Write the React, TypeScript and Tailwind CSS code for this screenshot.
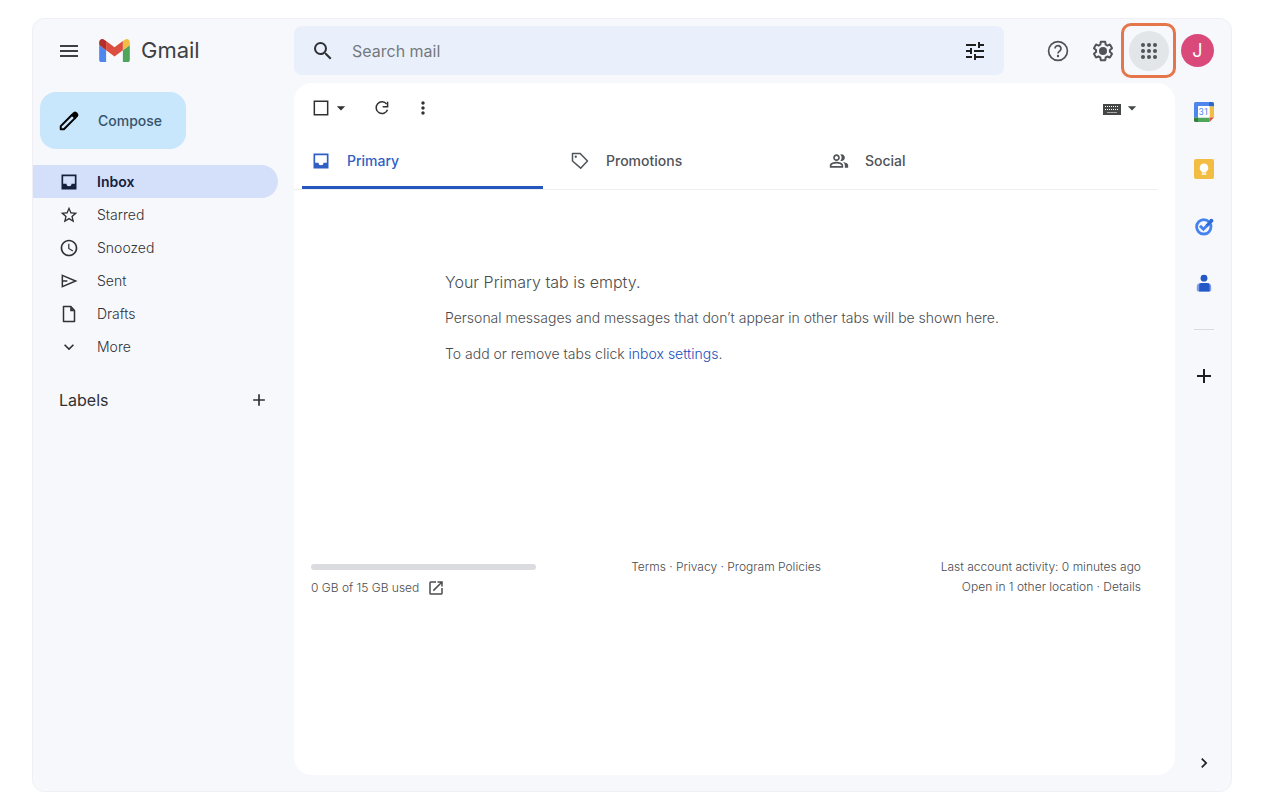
import React from 'react';
import {
  MdAccessTime,
  MdAdd,
  MdArrowDropDown,
  MdChevronRight,
  MdExpandMore,
  MdMenu,
  MdMoreVert,
  MdOpenInNew,
  MdOutlinePeopleAlt,
  MdSearch,
  MdStarBorder,
  MdTune,
} from 'react-icons/md';

const GmailLogo = () => (
  <svg width="31" height="23" viewBox="52 42 88 66" aria-hidden="true">
    <path fill="#4f86ee" d="M58 108h14V74L52 59v43c0 3.32 2.69 6 6 6" />
    <path fill="#4fa65a" d="M120 108h14c3.32 0 6-2.69 6-6V59l-20 15" />
    <path fill="#f2bd42" d="M120 48v26l20-15v-8c0-7.42-8.47-11.65-14.4-7.2" />
    <path fill="#dc4e3f" d="M72 74V48l24 18 24-18v26L96 92" />
    <path fill="#b3302a" d="M52 51v8l20 15V48l-5.6-4.2c-5.94-4.45-14.4-.22-14.4 7.2" />
  </svg>
);

const PencilIcon = () => (
  <svg width="22" height="22" viewBox="0 0 24 24" aria-hidden="true">
    <path
      d="M3 21v-3.4L15.4 5.2l3.4 3.4L6.4 21z"
      fill="none"
      stroke="#000"
      strokeWidth="2.2"
      strokeLinejoin="round"
    />
    <path d="M14 5.2 16.9 2.4a2.6 2.6 0 0 1 3.4 0l1.3 1.3a2.6 2.6 0 0 1 0 3.4L18.8 10z" fill="#000" />
  </svg>
);

const InboxIcon = () => (
  <svg width="20" height="20" viewBox="0 0 24 24" fill="currentColor" aria-hidden="true">
    <path d="M3 3h18v18H3zm2 2v9h4a3 3 0 0 0 6 0h4V5z" fillRule="evenodd" />
  </svg>
);

const SquareIcon = () => (
  <svg width="20" height="20" viewBox="0 0 24 24" aria-hidden="true">
    <path d="M4 4h16v16H4z" fill="none" stroke="currentColor" strokeWidth="1.8" />
  </svg>
);

const RefreshIcon = () => (
  <svg width="20" height="20" viewBox="0 0 24 24" aria-hidden="true">
    <path d="M17.6 7.4A7 7 0 1 0 18.6 14" fill="none" stroke="currentColor" strokeWidth="1.8" />
    <path d="M19.6 4.5v6.8h-6.8v-1.8h5V4.5z" fill="currentColor" />
  </svg>
);

const KeyboardIcon = () => (
  <svg width="20" height="20" viewBox="0 0 20 20" aria-hidden="true">
    <path d="M1 6h18v11H1z" fill="currentColor" />
    {[3, 5, 7, 9, 11, 13, 15].map((x) => (
      <path key={x} d={`M${x} 8h1v1h-1zM${x} 11h1v1h-1z`} fill="#fff" />
    ))}
    <path d="M5 14h10v1H5z" fill="#aaa" />
  </svg>
);

const FileIcon = () => (
  <svg width="20" height="20" viewBox="0 0 24 24" aria-hidden="true">
    <path d="M5.4 3h8.8l4.4 4.8V21H5.4z" fill="none" stroke="currentColor" strokeWidth="1.8" strokeLinejoin="round" />
    <path d="M13.4 3v5.8h5.2z" fill="currentColor" />
  </svg>
);

const SendIcon = () => (
  <svg width="20" height="20" viewBox="0 0 24 24" aria-hidden="true">
    <path
      d="M4 5.2 20 12 4 18.8zM4 12h6"
      fill="none"
      stroke="currentColor"
      strokeWidth="1.8"
      strokeLinejoin="miter"
    />
  </svg>
);

const TagIcon = () => (
  <svg width="20" height="20" viewBox="0 0 24 24" aria-hidden="true">
    <path
      d="M3 3h9.2l8.8 9-8.2 8.6L3 12z"
      fill="none"
      stroke="currentColor"
      strokeWidth="1.8"
      strokeLinejoin="round"
    />
    <circle cx="6.9" cy="6.9" r="1.4" fill="currentColor" />
  </svg>
);

const HelpIcon = () => (
  <svg width="24" height="24" viewBox="0 0 24 24" aria-hidden="true">
    <circle cx="12" cy="12" r="9.4" fill="none" stroke="currentColor" strokeWidth="1.7" />
    <path
      d="M9 9.6a3 3 0 1 1 4.9 2.3c-1 .8-1.9 1.3-1.9 2.6"
      fill="none"
      stroke="currentColor"
      strokeWidth="1.7"
    />
    <circle cx="12" cy="17" r="1.2" fill="currentColor" />
  </svg>
);

const GearIcon = () => (
  <svg width="24" height="24" viewBox="0 0 24 24" aria-hidden="true">
    <path
      d="M13.85 22.25h-3.7c-.74 0-1.36-.54-1.45-1.27l-.27-1.89c-.27-.14-.53-.29-.79-.46l-1.8.72c-.7.26-1.47-.03-1.81-.65L2.2 15.53c-.35-.66-.2-1.44.36-1.88l1.53-1.19c-.01-.15-.02-.3-.02-.46 0-.15.01-.31.02-.46l-1.52-1.19c-.59-.45-.74-1.26-.37-1.88l1.85-3.19c.34-.62 1.11-.9 1.79-.63l1.81.73c.26-.17.52-.32.78-.46l.27-1.91c.09-.7.71-1.25 1.44-1.25h3.7c.74 0 1.36.54 1.45 1.27l.27 1.89c.27.14.53.29.79.46l1.8-.72c.71-.26 1.48.03 1.82.65l1.84 3.18c.36.66.2 1.44-.36 1.88l-1.52 1.19c.01.15.02.3.02.46s-.01.31-.02.46l1.52 1.19c.56.45.72 1.23.37 1.86l-1.86 3.22c-.34.62-1.11.9-1.8.63l-1.8-.72c-.26.17-.52.32-.78.46l-.27 1.91c-.1.68-.72 1.22-1.46 1.22zm-3.23-2h2.76l.37-2.55.53-.22c.44-.18.88-.44 1.34-.78l.45-.34 2.38.96 1.38-2.4-2.03-1.58.07-.56c.03-.26.06-.51.06-.78s-.03-.53-.06-.78l-.07-.56 2.03-1.58-1.39-2.4-2.39.96-.45-.35c-.42-.32-.87-.58-1.33-.77l-.52-.22-.37-2.55h-2.76l-.37 2.55-.53.21c-.44.19-.88.44-1.34.79l-.45.33-2.38-.95-1.39 2.39 2.03 1.58-.07.56a7 7 0 0 0-.06.79c0 .26.02.53.06.78l.07.56-2.03 1.58 1.38 2.4 2.39-.96.45.35c.43.33.86.58 1.33.77l.53.22z"
      fill="currentColor"
    />
    <circle cx="12" cy="12" r="4" fill="currentColor" />
  </svg>
);

const AppsIcon = () => (
  <svg width="24" height="24" viewBox="0 0 24 24" fill="currentColor" aria-hidden="true">
    {[6, 12, 18].map((y) => [6, 12, 18].map((x) => <circle key={`${x}-${y}`} cx={x} cy={y} r="2" />))}
  </svg>
);

const CalendarIcon = () => (
  <svg width="20" height="20" viewBox="0 0 20 20" aria-hidden="true">
    <path d="M1.5 0H15v4.5H4.5V15.5H0v-14A1.5 1.5 0 0 1 1.5 0" fill="#4f86ee" />
    <path d="M15 0h3.5A1.5 1.5 0 0 1 20 1.5v3h-5z" fill="#2f66c9" />
    <path d="M15.5 4.5H20v11h-4.5z" fill="#f2bd42" />
    <path d="M4 15.5h11.5V20H4z" fill="#4fa65a" />
    <path d="M0 15.5h4V20H1.5A1.5 1.5 0 0 1 0 18.5z" fill="#357f3f" />
    <path d="M15.5 15.5H20L15.5 20z" fill="#dc4e3f" />
    <path d="M4 4h11.5v11.5H4z" fill="#fff" />
    <text x="9.8" y="13.2" fontSize="9" textAnchor="middle" fill="#4f86ee" fontFamily="Roboto, sans-serif">
      31
    </text>
  </svg>
);

const KeepIcon = () => (
  <svg width="20" height="20" viewBox="0 0 20 20" aria-hidden="true">
    <rect width="20" height="20" rx="2" fill="#f2bd42" />
    <path d="M10 4.6a4.3 4.3 0 0 0-2.3 7.9v1h4.6v-1A4.3 4.3 0 0 0 10 4.6M7.7 14.2h4.6v1.5H7.7z" fill="#fff" />
  </svg>
);

const TasksIcon = () => (
  <svg width="20" height="20" viewBox="0 0 20 20" aria-hidden="true">
    <circle cx="9.8" cy="10.8" r="7.2" fill="none" stroke="#4483ee" strokeWidth="2.8" />
    <path d="m6 9.8 3.4 3.4 4.2-4.2" fill="none" stroke="#4483ee" strokeWidth="3" />
    <path d="m12.8 9.8 4.4-4.8" stroke="#2f6ad6" strokeWidth="3" />
    <circle cx="17.4" cy="4.8" r="2" fill="#2f6ad6" />
  </svg>
);

const ContactsIcon = () => (
  <svg width="20" height="20" viewBox="0 0 20 20" aria-hidden="true">
    <circle cx="10" cy="5.2" r="3.4" fill="#2458c6" />
    <path d="M6.8 10h6.4a4 4 0 0 1 4 4v3a1.4 1.4 0 0 1-1.4 1.4H4.2A1.4 1.4 0 0 1 2.8 17v-3a4 4 0 0 1 4-4" fill="#7d9ceb" />
    <path d="M7.6 10h5.6a2.4 2.4 0 0 1 2.4 2.4v6H5.2v-6A2.4 2.4 0 0 1 7.6 10" fill="#2458c6" />
  </svg>
);

const folders = [
  { name: 'Inbox', icon: <InboxIcon />, active: true },
  { name: 'Starred', icon: <MdStarBorder size={20} /> },
  { name: 'Snoozed', icon: <MdAccessTime size={20} /> },
  { name: 'Sent', icon: <SendIcon /> },
  { name: 'Drafts', icon: <FileIcon /> },
  { name: 'More', icon: <MdExpandMore size={20} /> },
];

const tabs = [
  { name: 'Primary', icon: <InboxIcon />, active: true },
  { name: 'Promotions', icon: <TagIcon /> },
  { name: 'Social', icon: <MdOutlinePeopleAlt size={20} /> },
];

const sideApps = [
  { name: 'Calendar', icon: <CalendarIcon /> },
  { name: 'Keep', icon: <KeepIcon /> },
  { name: 'Tasks', icon: <TasksIcon /> },
  { name: 'Contacts', icon: <ContactsIcon /> },
];

const Header = () => (
  <header className="flex items-center pt-1 pb-[5px]">
    <div className="flex w-[261px] shrink-0 items-center pl-6">
      <button aria-label="Main menu" className="text-[#3c4043]">
        <MdMenu size={24} />
      </button>
      <a href="#" className="ml-[18px] flex items-center gap-[11px] text-[22px] text-[#3c4043]">
        <GmailLogo />
        Gmail
      </a>
    </div>
    <form role="search" className="flex h-[49px] flex-1 items-center rounded-lg bg-[#e9f0fb] px-[17px]">
      <button type="button" aria-label="Search" className="text-[#303134]">
        <MdSearch size={24} />
      </button>
      <input
        type="text"
        aria-label="Search mail"
        placeholder="Search mail"
        className="mx-[17px] min-w-0 flex-1 bg-transparent text-base outline-none placeholder:text-[#75797d]"
      />
      <button type="button" aria-label="Show search options" className="text-[#1f1f1f]">
        <MdTune size={24} />
      </button>
    </form>
    <div className="flex w-[227px] shrink-0 items-center justify-end pr-[17px] text-[#505357]">
      <button aria-label="Support">
        <HelpIcon />
      </button>
      <button aria-label="Settings" className="ml-[21px]">
        <GearIcon />
      </button>
      <div className="ml-[6px] flex h-[55px] w-[55px] items-center justify-center rounded-[10px] border-3 border-[#e5754a]">
        <button aria-label="Google apps" className="flex h-10 w-10 items-center justify-center rounded-full bg-[#e2e6e9]">
          <AppsIcon />
        </button>
      </div>
      <button
        aria-label="Account"
        className="ml-[5px] flex h-[33px] w-[33px] items-center justify-center rounded-full bg-[#d94a7a] text-lg text-white"
      >
        J
      </button>
    </div>
  </header>
);

const Sidebar = () => (
  <aside className="w-[261px] shrink-0 pr-4">
    <button className="mt-[9px] ml-[7px] flex h-[57px] items-center gap-[18px] rounded-[16px] bg-[#c8e6fc] pr-6 pl-[18px] text-sm font-medium text-[#36536b]">
      <PencilIcon />
      Compose
    </button>
    <nav className="mt-4">
      {folders.map((folder) => (
        <a
          key={folder.name}
          href="#"
          className={`flex h-[33px] items-center gap-[18px] rounded-r-full pl-[26px] text-sm ${
            folder.active ? 'bg-[#d4e0fa] font-semibold text-[#14213d]' : 'font-light text-[#303134]'
          }`}
        >
          {folder.icon}
          {folder.name}
        </a>
      ))}
    </nav>
    <div className="mt-[22px] flex h-[30px] items-center justify-between pr-[9px] pl-[26px] text-base text-[#303134]">
      <h2>Labels</h2>
      <button aria-label="Create new label">
        <MdAdd size={20} />
      </button>
    </div>
  </aside>
);

const MailPanel = () => (
  <main className="min-w-0 flex-1 rounded-[18px] bg-white">
    <div className="flex h-[50px] items-center pr-[33px] pl-[17px] text-[#303134]">
      <button aria-label="Select" className="flex items-center">
        <SquareIcon />
        <MdArrowDropDown size={20} />
      </button>
      <button aria-label="Refresh" className="ml-[21px]">
        <RefreshIcon />
      </button>
      <button aria-label="More" className="ml-[21px]">
        <MdMoreVert size={20} />
      </button>
      <button aria-label="Input tools" className="ml-auto flex items-center text-[#444746]">
        <KeyboardIcon />
        <MdArrowDropDown size={20} />
      </button>
    </div>
    <div role="tablist" className="mr-[18px] flex h-[57px] gap-[18px] border-b border-[#eceef1] pl-2">
      {tabs.map((tab) => (
        <button
          key={tab.name}
          role="tab"
          aria-selected={!!tab.active}
          className={`flex max-w-[241px] flex-1 items-center gap-4 border-b-3 pt-[3px] pl-[9px] text-sm font-medium ${
            tab.active ? 'border-[#2457bd] text-[#2f5fc4]' : 'border-transparent text-[#505357]'
          }`}
        >
          {tab.icon}
          {tab.name}
        </button>
      ))}
    </div>
    <div className="flex flex-col gap-4 px-[151px] pt-[82px] text-sm leading-5 font-light text-[#4a4c4f]">
      <p className="text-base leading-5">Your Primary tab is empty.</p>
      <p>Personal messages and messages that don’t appear in other tabs will be shown here.</p>
      <p>
        To add or remove tabs click{' '}
        <a href="#" className="text-[#1a4cb8]">
          inbox settings
        </a>
        .
      </p>
    </div>
    <footer className="mt-[193px] grid grid-cols-3 pr-[34px] pl-[17px] text-xs leading-5 font-light text-[#4a4c4f]">
      <div className="pt-[7px]">
        <div className="h-[6px] max-w-[225px] rounded-full bg-[#dadce0]" />
        <p className="mt-2 flex items-center gap-2">
          0 GB of 15 GB used
          <a href="#" aria-label="Manage storage">
            <MdOpenInNew size={18} />
          </a>
        </p>
      </div>
      <p className="text-center">
        <a href="#">Terms</a> · <a href="#">Privacy</a> · <a href="#">Program Policies</a>
      </p>
      <div className="text-right">
        <p>Last account activity: 0 minutes ago</p>
        <p>
          Open in 1 other location · <a href="#">Details</a>
        </p>
      </div>
    </footer>
  </main>
);

const SidePanel = () => (
  <aside className="flex w-14 shrink-0 flex-col items-center pt-[19px] pl-[2px]">
    <div className="flex flex-col gap-[37px]">
      {sideApps.map((app) => (
        <button key={app.name} aria-label={app.name}>
          {app.icon}
        </button>
      ))}
    </div>
    <hr className="mt-9 w-5 border-[#dadce0]" />
    <button aria-label="Get add-ons" className="mt-[34px] text-[#1f1f1f]">
      <MdAdd size={24} />
    </button>
    <button aria-label="Hide side panel" className="mt-auto mb-[2px] text-[#1f1f1f]">
      <MdChevronRight size={20} />
    </button>
  </aside>
);

const App = () => {
  return (
    <div className="flex min-h-screen bg-white pt-[18px] pr-[38px] pb-[10px] pl-8 font-['Inter',sans-serif]">
      <div className="flex flex-1 flex-col rounded-xl border border-[#f0eff5] bg-[#f7f8fc] pb-4">
        <Header />
        <div className="flex flex-1">
          <Sidebar />
          <MailPanel />
          <SidePanel />
        </div>
      </div>
    </div>
  );
};

export default App;
